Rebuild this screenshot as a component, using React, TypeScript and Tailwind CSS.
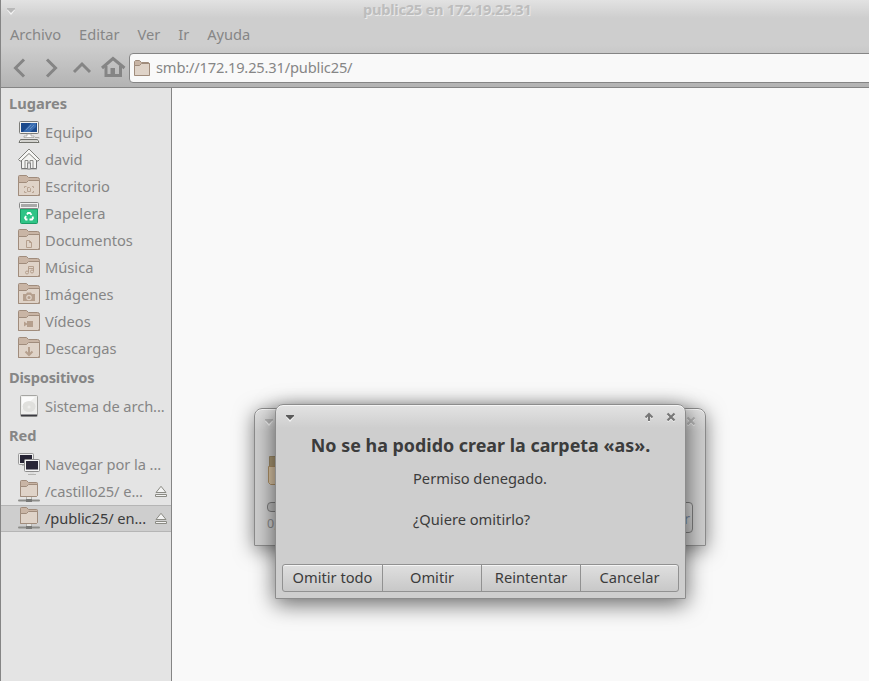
import type { ReactNode } from 'react';

function Svg({ children, className = 'h-6 w-6' }: { children: ReactNode; className?: string }) {
  return (
    <svg viewBox="0 0 24 24" className={`shrink-0 ${className}`} fill="none">
      {children}
    </svg>
  );
}

function Folder({ children }: { children?: ReactNode }) {
  return (
    <Svg>
      <path d="M1.500 21.500V2.500q0-1 1-1h7l2 2h9q2 0 2 2v16z" fill="#c9b5a5" stroke="#a08c7c" />
      <path d="M1.500 8.500h8l2-2h11v13q0 2-2 2h-19z" fill="#dfd3c8" stroke="#a08c7c" />
      {children}
    </Svg>
  );
}

function NetFolder() {
  return (
    <Svg>
      <path d="M3.500 17.500V2.500q0-1 1-1h5l2 2h8q1 0 1 1v12l-1 1z" fill="#c9b5a5" stroke="#a08c7c" />
      <path d="M3.500 7.500h6l2-2h9v11l-1 1h-16z" fill="#dfd3c8" stroke="#a08c7c" />
      <path d="M10 18h4v3h-4z" fill="#e6e6e3" />
      <path d="M9.500 18v2.500M14.500 18v2.500" stroke="#b4b4b0" />
      <path d="M2 20.500h20q1 0 1 1t-1 1H2q-1 0-1-1t1-1z" fill="#8d8d8a" />
      <path d="M9 20h6v3H9z" fill="#797977" />
    </Svg>
  );
}

const icons: Record<string, ReactNode> = {
  Equipo: (
    <Svg>
      <rect x="2.500" y="1.500" width="19" height="12" rx="1" fill="#f2f2f0" stroke="#7c7c78" />
      <rect x="4" y="3" width="16" height="9" fill="#1c4a8c" />
      <path d="M6 12l8-9h5v4l-6 5z" fill="#3b6eb1" />
      <path d="M9 10l5-5M13 9l4-4" stroke="#6f96c8" strokeWidth=".8" />
      <path d="M10 14h4v2h3v1.500H7V16h3z" fill="#fff" stroke="#9a9a95" strokeWidth=".7" />
      <path d="M3.500 19.500h17l1.500 3H2z" fill="#f0f0ee" stroke="#70716b" />
      <path d="M4 21h16" stroke="#b4b4ae" />
      <path d="M18 17.500h4v1" stroke="#a9a9a4" />
    </Svg>
  ),
  david: (
    <Svg>
      <path d="M4 22.500h16" stroke="#c4c4c2" />
      <path d="M4.500 13v8.500h15V12L12 5z" fill="#f4f4f2" stroke="#777" />
      <path d="M8 21v-7.500h3V18m2 0v-4.500h3V21" stroke="#8b8b88" />
      <path d="M10.500 22v-6h3v6z" fill="#e4e4e4" stroke="#888" />
      <path
        d="M1.500 12.500L12 2l10.500 10.500-1.500 1.500h-1L12 6.500 4 14H3z"
        fill="#f7f7f5"
        stroke="#80807c"
        strokeLinejoin="round"
      />
    </Svg>
  ),
  Escritorio: (
    <Folder>
      <path d="M7.500 14v-1.500h2M15 12.500h1.500V14M7.500 17v1.500h2M15 18.500h1.500V17" stroke="#b9a594" />
      <path d="M10.500 13.500h2l1 1v3h-3z" stroke="#b9a594" />
    </Folder>
  ),
  Papelera: (
    <Svg>
      <path d="M3.500 8v13.500q0 1 1 1h15q1 0 1-1V8z" fill="#2fc486" stroke="#1b9c65" />
      <rect x="2.500" y="1.500" width="19" height="6" rx="1" fill="#f1f1f1" stroke="#888" />
      <path d="M4 3h16v3H4z" fill="#a9a9a9" />
      <path d="M10 13.500l1-1.500h2l1.500 2M15.500 15.500l.5 1.500-1 1.500h-2.500M10.500 18.500H9L8 17l1-2" stroke="#fff" strokeWidth="1.800" />
    </Svg>
  ),
  Documentos: (
    <Folder>
      <path d="M9.500 12.500h3l2 2v5h-5zM12.500 12.500v2h2" stroke="#b59f8d" />
    </Folder>
  ),
  Música: (
    <Folder>
      <path d="M11.500 17v-5.500h5V16M11.500 13.500h5" stroke="#b59f8d" />
      <circle cx="10" cy="17.500" r="1.500" stroke="#b59f8d" />
      <circle cx="15" cy="16.500" r="1.500" stroke="#b59f8d" />
    </Folder>
  ),
  Imágenes: (
    <Folder>
      <path d="M6 12h3l1-1.500h4l1 1.500h3v7H6z" fill="#b59f8d" />
      <circle cx="12" cy="15.500" r="2.200" stroke="#dfd3c8" strokeWidth="1.200" />
    </Folder>
  ),
  Vídeos: (
    <Folder>
      <path d="M10 12h6v6h-6zM7 12.500l3 2v1l-3 2z" fill="#b59f8d" />
    </Folder>
  ),
  Descargas: (
    <Folder>
      <path d="M12 11v8M8.500 15.500l3.500 3.500 3.500-3.500" stroke="#b59f8d" strokeWidth="2" />
    </Folder>
  ),
  'Sistema de arch...': (
    <Svg>
      <rect x="3.500" y="1.500" width="17" height="21" rx="1" fill="#efefed" stroke="#a5a5a2" />
      <path d="M4 20.500h16v1.800H4z" fill="#3a3a40" />
      <path d="M5 3h13L5 15z" fill="#fbfbfb" />
      <ellipse cx="12" cy="12.500" rx="6.500" ry="5.500" fill="#e0e0dd" />
      <circle cx="12" cy="13" r="1.500" fill="#ededeb" />
    </Svg>
  ),
  'Navegar por la ...': (
    <Svg>
      <rect x="1.500" y="1.500" width="15" height="11" rx="1" fill="#eee" stroke="#999" />
      <rect x="3" y="3" width="12" height="8" fill="#252333" />
      <path d="M5 13.500h3" stroke="#bbb" />
      <rect x="7.500" y="7.500" width="15" height="12" rx="1" fill="#f4f4f4" stroke="#8e8e8e" />
      <rect x="9" y="9" width="12" height="8.500" fill="#292637" />
      <path d="M13 20h4v2h-4z" fill="#ddd" />
      <path d="M11 22.500h8" stroke="#b5b5b3" />
    </Svg>
  ),
  '/castillo25/ e...': <NetFolder />,
  '/public25/ en...': <NetFolder />,
};

function Eject() {
  return (
    <svg viewBox="0 0 14 14" className="mt-1.5 mr-[3px] h-3.5 w-3.5 shrink-0" fill="#f3f3f3" stroke="#8b8b84">
      <path d="M7 1.300L12 7.500H2z" />
      <path d="M1.500 9.500h11v2h-11z" />
    </svg>
  );
}

const groups = [
  { title: 'Lugares', rows: ['Equipo', 'david', 'Escritorio', 'Papelera', 'Documentos', 'Música', 'Imágenes', 'Vídeos', 'Descargas'] },
  { title: 'Dispositivos', rows: ['Sistema de arch...'] },
  { title: 'Red', rows: ['Navegar por la ...', '/castillo25/ e...', '/public25/ en...'] },
];

function Sidebar() {
  return (
    <nav className="w-[171px] shrink-0 border-r border-[#858585] bg-[#e4e4e4] text-[#868686]">
      {groups.map((g) => (
        <section key={g.title}>
          <h2 className={`h-[31px] pl-2 leading-[31px] font-bold ${g.title === 'Dispositivos' ? 'tracking-[-0.25px]' : ''}`}>
            {g.title}
          </h2>
          {g.rows.map((r) => {
            const selected = r === '/public25/ en...';
            return (
              <div
                key={r}
                className={`flex h-[27px] items-start border-y pl-4 ${
                  selected ? 'border-[#b5b5b5] bg-[#cecece] text-[#3c3c3c]' : 'border-transparent'
                }`}
              >
                {icons[r]}
                <span
                  className={`ml-1 flex-1 leading-6 whitespace-nowrap ${r.endsWith('...') ? 'tracking-[-0.08px]' : ''}`}
                >
                  {r}
                </span>
                {r.startsWith('/') && <Eject />}
              </div>
            );
          })}
        </section>
      ))}
    </nav>
  );
}

function MenuArrow({ color }: { color: string }) {
  return (
    <svg viewBox="0 0 8 7" className="mt-0.5 h-[7px] w-2 shrink-0">
      <path d="M0 2h8L4 7z" fill="#f4f4f4" />
      <path d="M0 0h8v1L4 5 0 1z" fill={color} />
    </svg>
  );
}

function CloseMark({ color }: { color: string }) {
  return (
    <svg viewBox="0 0 10 10" className="h-2.5 w-2.5 shrink-0" fill="none" strokeWidth="2.200">
      <path d="M1.500 2.500l7 7m0-7l-7 7" stroke="#f0f0f0" />
      <path d="M1.500 1.500l7 7m0-7l-7 7" stroke={color} />
    </svg>
  );
}

function ProgressWindow() {
  return (
    <div className="absolute top-[408px] left-[254px] flex h-[138px] w-[452px] flex-col rounded-t-lg border border-[#8c8c8c] bg-linear-to-b from-[#e1e1e1] to-[#cecece] to-[22px] shadow-[0_4px_20px_rgba(0,0,0,0.5),inset_0_1px_0_#f5f5f5]">
      <div className="flex h-6 items-center justify-between pr-[9px] pl-2.5">
        <MenuArrow color="#b5b5b5" />
        <CloseMark color="#b5b5b5" />
      </div>
      <div className="flex flex-1 justify-between pr-3 pl-3">
        <div className="flex flex-col pt-[22px]">
          <svg viewBox="0 0 20 32" className="h-8 w-5">
            <path d="M2.500 1.500h16v11h-16z" fill="#a99773" stroke="#9a8967" />
            <path d="M1.500 11.500h17v18h-15l-2-2z" fill="#d9c4a5" stroke="#ad9065" />
          </svg>
          <div className="mt-[15px] h-2.5 w-10 rounded border border-[#7f7f7f] bg-[#bdbdbd]" />
          <span className="mt-[3px] text-[12.500px] leading-[18px] text-[#8c8c8c]">0,0 %</span>
        </div>
        <div className="mt-[69px] flex h-[31px] w-20 items-center justify-end rounded border border-[#7f7f7f] bg-linear-to-b from-[#d8d8d8] to-[#c8c8c8] pr-0.5 text-[#7d8ba3]">
          Cancelar
        </div>
      </div>
    </div>
  );
}

function ErrorDialog() {
  return (
    <div className="absolute top-[404px] left-[275px] flex h-[195px] w-[411px] flex-col rounded-t-lg border border-[#8c8c8c] bg-linear-to-b from-[#e3e3e3] to-[#cecece] to-[23px] text-[#3c3c3c] shadow-[0_5px_22px_rgba(0,0,0,0.6),inset_0_1px_0_#f5f5f5]">
      <div className="flex h-6 items-center pr-[9px] pl-2.5">
        <MenuArrow color="#5a5a5a" />
        <span className="flex-1" />
        <svg viewBox="0 0 10 10" className="mr-3 h-2.5 w-2.5" fill="none" strokeWidth="2">
          <path d="M5 10V3M1.500 6.500L5 3l3.500 3.500" stroke="#f0f0f0" />
          <path d="M5 9V2M1.500 5.500L5 2l3.500 3.500" stroke="#777" />
        </svg>
        <CloseMark color="#777" />
      </div>
      <h1 className="mt-[3px] text-center text-[17.9px] leading-[26px] font-bold whitespace-nowrap">
        No se ha podido crear la carpeta «as».
      </h1>
      <div className="mt-2.5 pl-[137px] leading-5">
        <p>Permiso denegado.</p>
        <p className="mt-[21px]">¿Quiere omitirlo?</p>
      </div>
      <div className="mx-1.5 mt-auto mb-1.5 grid h-7 grid-cols-[100px_99px_99px_1fr] divide-x divide-[#919191] rounded-[3px] border border-[#919191] bg-linear-to-b from-[#dfdfdf] to-[#c8c8c8] shadow-[inset_0_1px_0_#f5f5f5]">
        {['Omitir todo', 'Omitir', 'Reintentar', 'Cancelar'].map((b) => (
          <button key={b} type="button" className="pb-0.5 whitespace-nowrap">
            {b}
          </button>
        ))}
      </div>
    </div>
  );
}

export default function App() {
  return (
    <main className="relative flex h-[681px] w-[869px] flex-col overflow-hidden border-l border-[#858585] bg-[#f9f9f9] font-['Noto_Sans',sans-serif] text-[14.67px]">
      <header className="flex h-[88px] flex-col border-b border-[#858585] bg-[linear-gradient(#e2e2e2,#cecece_18px,#cecece_45px,#b3b3b3)] text-[#868686]">
        <div className="flex h-5 items-center pl-1.5">
          <MenuArrow color="#b8b8b8" />
          <span className="ml-[348px] pb-0.5 font-bold tracking-[-0.27px] text-[#bdbdbd] [text-shadow:1px_1px_0_#eaeaea]">
            public25 en 172.19.25.31
          </span>
        </div>
        <div className="flex h-[30px] items-center gap-[18px] pb-0.5 pl-[9px]">
          {['Archivo', 'Editar', 'Ver', 'Ir', 'Ayuda'].map((m) => (
            <span key={m} className="tracking-[-0.03px]">
              {m}
            </span>
          ))}
        </div>
        <div className="flex flex-1 items-start pt-[3px]">
          <svg viewBox="0 0 128 30" className="h-[30px] w-32 shrink-0" fill="none" stroke="#858585" strokeWidth="3">
            <path d="M23 6.500L14.500 15l8.500 8.500M46 6.500l8.500 8.500-8.500 8.500M73 19l8-8 8 8" />
            <path d="M101 15l11-9.500L123.500 15" />
            <path d="M105 13v9.500h14.500V13" />
            <path d="M109.500 15h4.500v8h-4.500z" fill="#858585" stroke="none" />
          </svg>
          <div className="-mr-2 flex h-[30px] flex-1 items-center rounded border border-[#858585] bg-[#f9f9f9] pl-[3px]">
            <svg viewBox="0 0 18 18" className="h-[18px] w-[18px]">
              <path d="M1.500 16V2.500l1-1h4l2 2h7l1 1V16z" fill="#c9b5a5" stroke="#a08c7c" />
              <path d="M1.500 6.500h5l2-2h8v12h-15z" fill="#dfd3c8" stroke="#a08c7c" />
            </svg>
            <span className="ml-[5px] pb-0.5 tracking-[-0.17px]">smb://172.19.25.31/public25/</span>
          </div>
        </div>
      </header>
      <div className="flex flex-1">
        <Sidebar />
      </div>
      <div className="absolute inset-y-0 -left-px w-0">
        <ProgressWindow />
        <ErrorDialog />
      </div>
    </main>
  );
}
